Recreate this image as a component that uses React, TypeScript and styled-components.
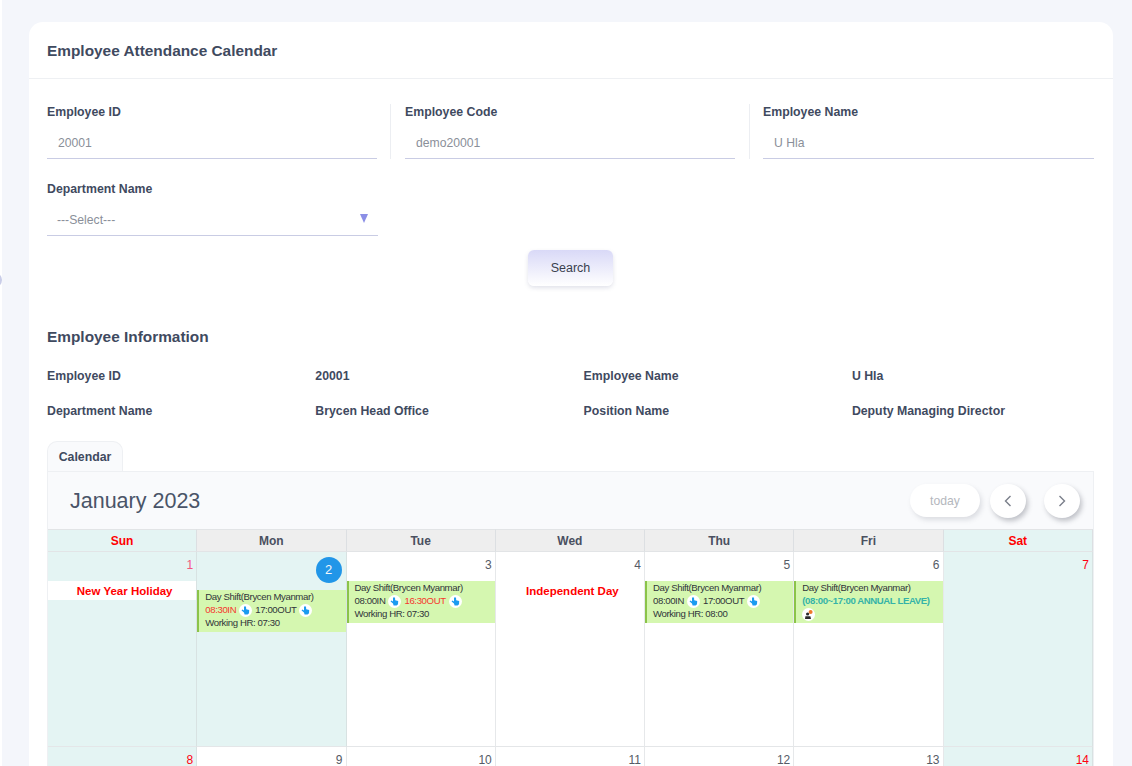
import React from 'react';
import styled, { createGlobalStyle } from 'styled-components';

const Global = createGlobalStyle`
  html, body { margin: 0; padding: 0; height: 100%; overflow: hidden; background: #f4f6fb; }
  body { font-family: "Liberation Sans", Arial, sans-serif; color: #3f4a5f; }
  * { box-sizing: border-box; }
`;

const Page = styled.div`
  height: 766px;
  overflow: hidden;
  padding: 22px 19px 0 29px;
  position: relative;
  box-shadow: inset 2px 0 0 #fff;
`;
const EdgeKnob = styled.div`
  position: absolute;
  left: -14px;
  top: 272px;
  width: 16px;
  height: 16px;
  border-radius: 50%;
  background: #c9cde8;
`;
const Card = styled.div`
  background: #fff;
  border-radius: 14px 14px 0 0;
  min-height: 900px;
`;
const CardHeader = styled.div`
  height: 57px;
  padding: 2px 18px 0;
  display: flex;
  align-items: center;
  border-bottom: 1px solid #eef0f3;
  font-size: 15.4px;
  font-weight: 700;
  color: #3f4a5f;
`;
const CardBody = styled.div`
  padding: 25px 19px 0 18px;
`;
const FieldGrid = styled.div`
  display: grid;
  grid-template-columns: 344px 344px 331px;
  column-gap: 14px;
  row-gap: 22px;
`;
const Field = styled.div<{ $divider?: boolean }>`
  padding-right: ${p => (p.$divider ? '13px' : '0')};
  border-right: ${p => (p.$divider ? '1px solid #eceef2' : 'none')};
  &:nth-child(2) {
    margin-right: -1px;
    padding-right: 14px;
  }
`;
const Label = styled.div`
  font-size: 12.3px;
  font-weight: 700;
  line-height: 16px;
  color: #3f4a5f;
`;
const InputBox = styled.div`
  height: 39px;
  padding: 8px 11px 0;
  display: flex;
  align-items: center;
  font-size: 12.2px;
  color: #8a8f99;
  border-bottom: 1px solid #c9cce4;
`;
const SelectBox = styled(InputBox)`
  justify-content: space-between;
  padding: 8px 10px 0;
  width: 331px;
`;
const Caret = styled.span`
  width: 0;
  height: 0;
  border-left: 4.5px solid transparent;
  border-right: 4.5px solid transparent;
  border-top: 9px solid #8b8fe6;
  margin-top: -4px;
`;
const ButtonRow = styled.div`
  display: flex;
  justify-content: center;
  margin-top: 14px;
`;
const SearchButton = styled.button`
  width: 85px;
  height: 36px;
  border: none;
  border-radius: 6px;
  font: 12.5px "Liberation Sans", Arial, sans-serif;
  color: #3a3f4f;
  background: linear-gradient(180deg, #d9d9f7 0%, #ffffff 100%);
  box-shadow: 0 2px 4px rgba(120, 125, 160, 0.22);
`;
const SectionTitle = styled.h2`
  margin: 41px 0 0;
  font-size: 15.4px;
  line-height: 20px;
  font-weight: 700;
  color: #3f4a5f;
`;
const InfoGrid = styled.div`
  display: grid;
  grid-template-columns: repeat(4, 268.3px);
  grid-auto-rows: 34.5px;
  margin-top: 21px;
  font-size: 12.3px;
  font-weight: 700;
  line-height: 16px;
  color: #3f4a5f;
`;
const TabBar = styled.div`
  display: flex;
  margin-top: 4px;
`;
const Tab = styled.div`
  width: 76px;
  height: 31px;
  margin-bottom: -1px;
  border: 1px solid #eef0f3;
  border-bottom: none;
  border-radius: 10px 10px 0 0;
  background: #f9fafc;
  font-size: 12.3px;
  font-weight: 700;
  display: flex;
  align-items: center;
  justify-content: center;
  color: #3f4a5f;
`;
const Calendar = styled.div`
  border: 1px solid #eef0f3;
  border-bottom: none;
  position: relative;
`;
const Toolbar = styled.div`
  height: 57px;
  background: #f9fafc;
  padding: 0 13px 0 22px;
  display: flex;
  align-items: center;
  justify-content: space-between;
`;
const MonthTitle = styled.div`
  font-size: 21.5px;
  padding-top: 2px;
  color: #4a5468;
`;
const ToolActions = styled.div`
  display: flex;
  align-items: center;
`;
const PillButton = styled.div`
  width: 70px;
  height: 33px;
  border-radius: 17px;
  background: #fff;
  color: #b4b7bd;
  font-size: 12.2px;
  display: flex;
  align-items: center;
  justify-content: center;
  box-shadow: 2px 3px 5px rgba(90, 95, 110, 0.18);
`;
const RoundButton = styled.div<{ $gap: number }>`
  width: 36px;
  height: 34px;
  margin-left: ${p => p.$gap}px;
  border-radius: 50%;
  background: #fff;
  color: #7a7f8a;
  display: flex;
  align-items: center;
  justify-content: center;
  box-shadow: 2px 3px 5px rgba(70, 75, 90, 0.32);
`;
const Week = styled.div`
  display: grid;
  grid-template-columns: repeat(6, 149.25px) 1fr;
`;
const HeadCell = styled.div<{ $off?: boolean }>`
  height: 23px;
  display: flex;
  align-items: center;
  justify-content: center;
  font-size: 12px;
  font-weight: 700;
  color: ${p => (p.$off ? '#f00' : '#4a5060')};
  background: ${p => (p.$off ? '#e4f4f3' : '#eeeeee')};
  border-top: 1px solid #e2e4e6;
  border-bottom: 1px solid #e2e4e6;
  border-right: 1px solid #dcdfe2;
`;
const DayCell = styled.div<{ $shade?: boolean }>`
  height: 195px;
  background: ${p => (p.$shade ? '#e4f4f3' : '#fff')};
  border-right: 1px solid ${p => (p.$shade ? '#d8e2e2' : '#e6e8ea')};
  border-bottom: 1px solid #e4e6e8;
`;
const DayNum = styled.div<{ $off?: boolean; $today?: boolean; $pink?: boolean }>`
  height: ${p => (p.$today ? '38px' : '29px')};
  padding: 5px 3px 0 0;
  text-align: right;
  font-size: 12px;
  line-height: 16px;
  color: ${p => (p.$pink ? '#f4557f' : p.$off ? '#f01' : '#555b66')};
`;
const TodayBadge = styled.span`
  display: inline-flex;
  width: 26px;
  height: 26px;
  margin-right: 1px;
  border-radius: 50%;
  align-items: center;
  justify-content: center;
  background: #2196e8;
  color: #f2f6fa;
  font-size: 13px;
`;
const Holiday = styled.div<{ $band?: boolean }>`
  height: 19px;
  padding-left: 5px;
  display: flex;
  align-items: center;
  justify-content: center;
  font-size: 11.5px;
  font-weight: 700;
  color: #f00;
  background: ${p => (p.$band ? '#fff' : 'transparent')};
`;
const Shift = styled.div`
  height: 42px;
  padding: 0 0 0 6px;
  border-left: 2px solid #8bc34a;
  background: #d5f7b0;
  font-size: 9.6px;
  line-height: 13px;
  color: #30343a;
  letter-spacing: -0.38px;
`;
const ShiftLine = styled.div`
  display: flex;
  align-items: center;
  height: 13px;
  white-space: nowrap;
`;
const Late = styled.span`
  color: #f5362e;
`;
const Leave = styled.span`
  color: #34b3a8;
  font-weight: 700;
  letter-spacing: -0.4px;
`;
const Badge = styled.svg`
  width: 13px;
  height: 13px;
  flex: none;
  margin: 1px 3px 0;
`;
const LeaveBadge = styled(Badge)`
  margin: 1px 0 0;
`;

const Hand = () => (
  <Badge viewBox="0 0 13 13">
    <circle cx="6.5" cy="6.5" r="6.5" fill="#fff" />
    <path d="M5 2.6 L7 2.6 L7.2 5.2 L10.2 6 L10 9.2 L8.6 10.6 L5.6 10.6 L5 8.4 L2.6 6.6 L3.2 5.6 L5 6.4 Z" fill="#1a9bf0" />
  </Badge>
);
const LeaveIcon = () => (
  <LeaveBadge viewBox="0 0 13 13">
    <circle cx="6.5" cy="6.5" r="6.5" fill="#fff" />
    <circle cx="8.6" cy="4" r="2" fill="#f0782a" />
    <circle cx="5.6" cy="6" r="1.6" fill="#2b2b2b" />
    <path d="M3 11 L3.4 8.2 L8.4 8.2 L9 11 Z" fill="#2b2b2b" />
  </LeaveBadge>
);
const Chevron = ({ left }: { left?: boolean }) => (
  <svg width="10" height="14" viewBox="0 0 10 14" fill="none" stroke="#7a7f8a" strokeWidth="1.4">
    <path d={left ? 'M7.5 2 L2.5 7 L7.5 12' : 'M2.5 2 L7.5 7 L2.5 12'} />
  </svg>
);

const field = (label: string, value: string, divider: boolean) => (
  <Field $divider={divider} key={label}>
    <Label>{label}</Label>
    <InputBox>{value}</InputBox>
  </Field>
);

const info = [
  'Employee ID', '20001', 'Employee Name', 'U Hla',
  'Department Name', 'Brycen Head Office', 'Position Name', 'Deputy Managing Director',
];
const days = ['Sun', 'Mon', 'Tue', 'Wed', 'Thu', 'Fri', 'Sat'];

export default function App() {
  return (
    <>
      <Global />
      <Page>
        <EdgeKnob />
        <Card>
          <CardHeader>Employee Attendance Calendar</CardHeader>
          <CardBody>
            <FieldGrid>
              {field('Employee ID', '20001', true)}
              {field('Employee Code', 'demo20001', true)}
              {field('Employee Name', 'U Hla', false)}
              <Field>
                <Label>Department Name</Label>
                <SelectBox>
                  ---Select---
                  <Caret />
                </SelectBox>
              </Field>
            </FieldGrid>
            <ButtonRow>
              <SearchButton>Search</SearchButton>
            </ButtonRow>
            <SectionTitle>Employee Information</SectionTitle>
            <InfoGrid>
              {info.map(t => (
                <div key={t}>{t}</div>
              ))}
            </InfoGrid>
            <TabBar>
              <Tab>Calendar</Tab>
            </TabBar>
            <Calendar>
              <Toolbar>
                <MonthTitle>January 2023</MonthTitle>
                <ToolActions>
                  <PillButton>today</PillButton>
                  <RoundButton $gap={10}>
                    <Chevron left />
                  </RoundButton>
                  <RoundButton $gap={18}>
                    <Chevron />
                  </RoundButton>
                </ToolActions>
              </Toolbar>
              <Week>
                {days.map((d, i) => (
                  <HeadCell key={d} $off={i === 0 || i === 6}>
                    {d}
                  </HeadCell>
                ))}
              </Week>
              <Week>
                <DayCell $shade>
                  <DayNum $off $pink>1</DayNum>
                  <Holiday $band>New Year Holiday</Holiday>
                </DayCell>
                <DayCell $shade>
                  <DayNum $today>
                    <TodayBadge>2</TodayBadge>
                  </DayNum>
                  <Shift>
                    <ShiftLine>Day Shift(Brycen Myanmar)</ShiftLine>
                    <ShiftLine>
                      <Late>08:30IN</Late>
                      <Hand />
                      17:00OUT
                      <Hand />
                    </ShiftLine>
                    <ShiftLine>Working HR: 07:30</ShiftLine>
                  </Shift>
                </DayCell>
                <DayCell>
                  <DayNum>3</DayNum>
                  <Shift>
                    <ShiftLine>Day Shift(Brycen Myanmar)</ShiftLine>
                    <ShiftLine>
                      08:00IN
                      <Hand />
                      <Late>16:30OUT</Late>
                      <Hand />
                    </ShiftLine>
                    <ShiftLine>Working HR: 07:30</ShiftLine>
                  </Shift>
                </DayCell>
                <DayCell>
                  <DayNum>4</DayNum>
                  <Holiday>Independent Day</Holiday>
                </DayCell>
                <DayCell>
                  <DayNum>5</DayNum>
                  <Shift>
                    <ShiftLine>Day Shift(Brycen Myanmar)</ShiftLine>
                    <ShiftLine>
                      08:00IN
                      <Hand />
                      17:00OUT
                      <Hand />
                    </ShiftLine>
                    <ShiftLine>Working HR: 08:00</ShiftLine>
                  </Shift>
                </DayCell>
                <DayCell>
                  <DayNum>6</DayNum>
                  <Shift>
                    <ShiftLine>Day Shift(Brycen Myanmar)</ShiftLine>
                    <ShiftLine>
                      <Leave>(08:00~17:00 ANNUAL LEAVE)</Leave>
                    </ShiftLine>
                    <ShiftLine>
                      <LeaveIcon />
                    </ShiftLine>
                  </Shift>
                </DayCell>
                <DayCell $shade>
                  <DayNum $off>7</DayNum>
                </DayCell>
              </Week>
              <Week>
                {[8, 9, 10, 11, 12, 13, 14].map((n, i) => {
                  const off = i === 0 || i === 6;
                  return (
                    <DayCell key={n} $shade={off}>
                      <DayNum $off={off}>{n}</DayNum>
                    </DayCell>
                  );
                })}
              </Week>
            </Calendar>
          </CardBody>
        </Card>
      </Page>
    </>
  );
}
